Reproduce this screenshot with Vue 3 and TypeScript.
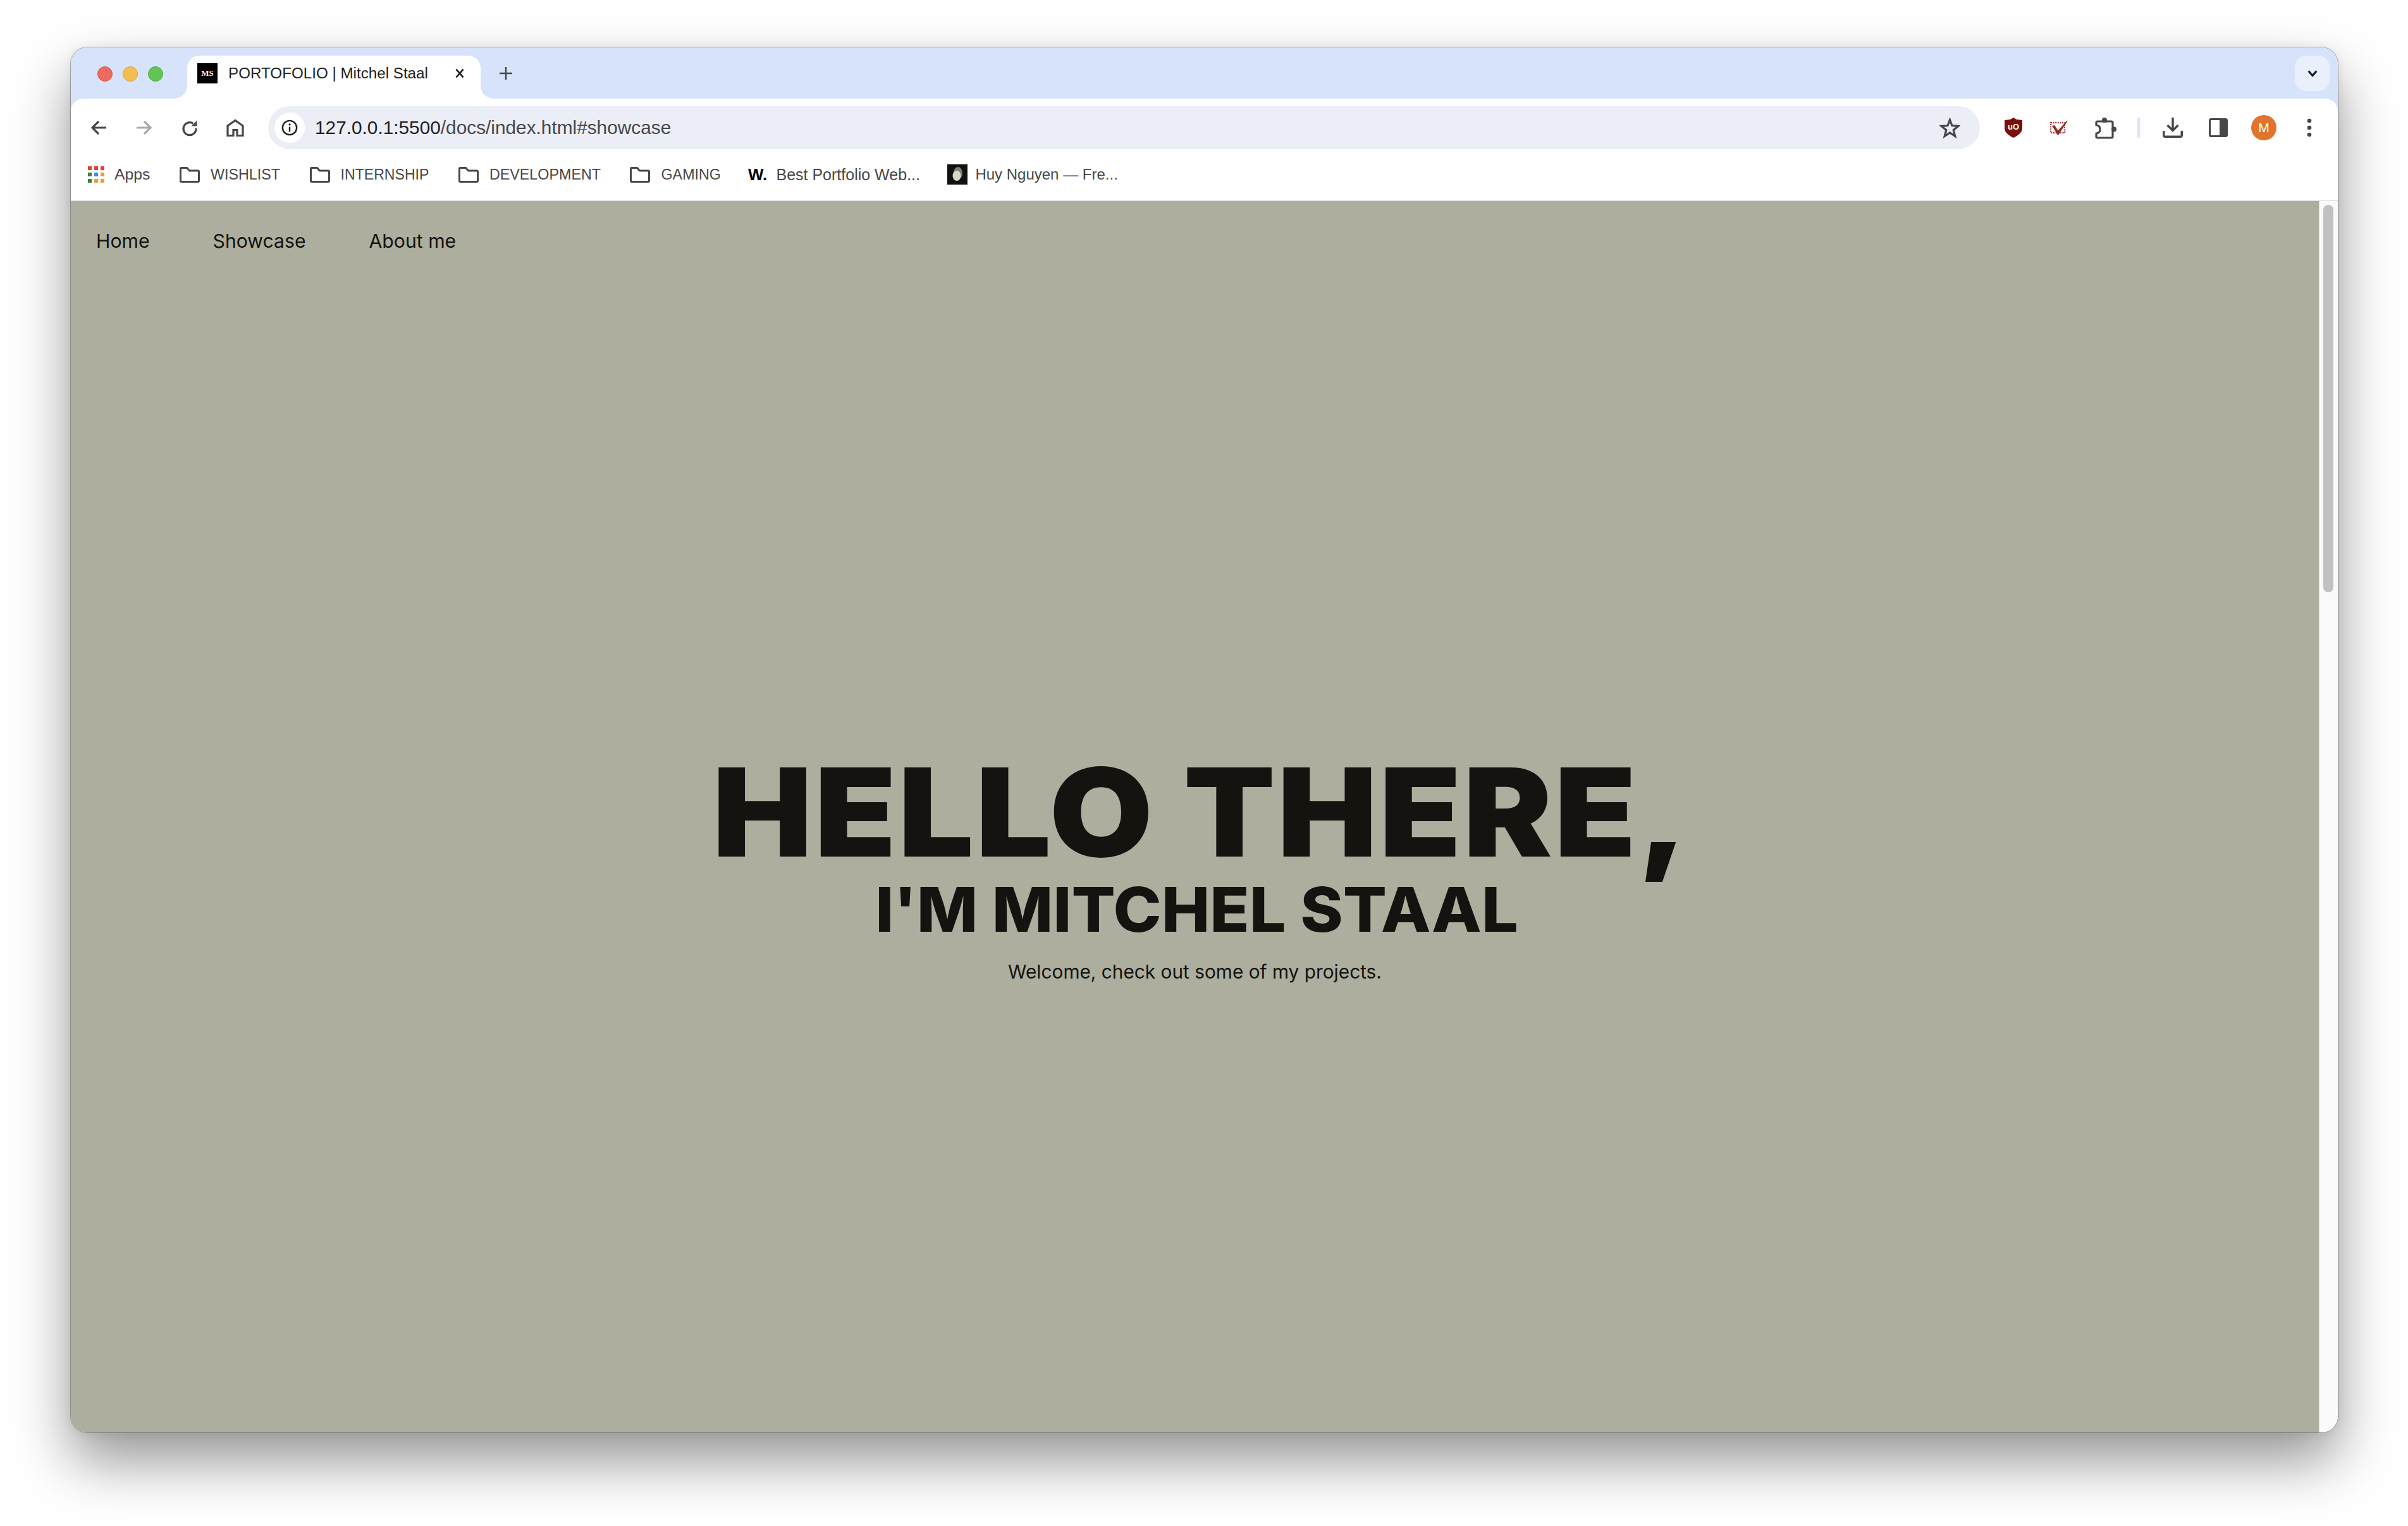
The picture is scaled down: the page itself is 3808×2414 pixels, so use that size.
<script setup lang="ts">
interface Bookmark { label: string; kind: 'apps' | 'folder' | 'w' | 'huy'; size: number }
const bookmarks: Bookmark[] = [
  { label: 'Apps', kind: 'apps', size: 24.8 },
  { label: 'WISHLIST', kind: 'folder', size: 23.3 },
  { label: 'INTERNSHIP', kind: 'folder', size: 23.1 },
  { label: 'DEVELOPMENT', kind: 'folder', size: 23.3 },
  { label: 'GAMING', kind: 'folder', size: 23.3 },
  { label: 'Best Portfolio Web...', kind: 'w', size: 25 },
  { label: 'Huy Nguyen — Fre...', kind: 'huy', size: 24 },
]
const appColors = ['#db4437', '#db4437', '#db4437', '#3a7d44', '#4285f4', '#e8a033', '#3a7d44', '#e8a033', '#e8a033']
const navItems = ['Home', 'Showcase', 'About me']
</script>

<template>
  <div class="stage">
    <div class="window">
      <div class="tabstrip">
        <div class="lights">
          <span class="light red"></span>
          <span class="light yellow"></span>
          <span class="light green"></span>
        </div>
        <div class="tab">
          <span class="favicon">MS</span>
          <span class="tab-title">PORTOFOLIO | Mitchel Staal</span>
          <svg class="tab-close" viewBox="0 0 20 20"><path d="M3 2 17 18M17 2 3 18" /></svg>
        </div>
        <svg class="new-tab" viewBox="0 0 24 24"><path d="M12 2V22M2 12H22" /></svg>
        <div class="strip-spacer"></div>
        <div class="tab-search">
          <svg viewBox="0 0 20 20"><path d="M3 6 10 14 17 6" /></svg>
        </div>
      </div>

      <div class="toolbar">
        <svg class="tool" viewBox="0 0 28 28"><path d="M26 14H4M14 4 4 14 14 24" /></svg>
        <svg class="tool dim" viewBox="0 0 28 28"><path d="M2 14H24M14 4 24 14 14 24" /></svg>
        <svg class="tool" viewBox="0 0 28 28">
          <path d="M24 15A10 10 0 1 1 19.500 7.300" />
          <path class="solid" d="M25.500 2.500V11.500H16.500Z" />
        </svg>
        <svg class="tool" viewBox="0 0 28 28"><path d="M14 2.500 2 11V26.500H11V17.500H17V26.500H26V11Z" /></svg>
        <div class="omnibox">
          <span class="site-info">
            <svg viewBox="0 0 28 28">
              <circle cx="14" cy="14" r="12" />
              <path d="M14 12.500V21" />
              <circle class="dot" cx="14" cy="8.500" r="1.800" />
            </svg>
          </span>
          <span class="url"><span class="host">127.0.0.1:5500</span>/docs/index.html#showcase</span>
          <svg class="star" viewBox="0 0 33 33"><path d="M16.500 3.500 20 12.800 30 13.400 22.200 19.700 24.800 29.500 16.500 24 8.200 29.500 10.800 19.700 3 13.400 13 12.800Z" /></svg>
        </div>
        <div class="extensions">
          <svg class="ext shield-icon" viewBox="0 0 28 32">
            <path class="shield" d="M14 0 19 3 28 4V17C28 24 20 29 14 32 8 29 0 24 0 17V4L9 3Z" />
            <text x="14" y="18.500" class="shield-text">uO</text>
          </svg>
          <svg class="ext check-icon" viewBox="0 0 28 22">
            <rect class="dotted" x="1" y="3" width="22" height="16" />
            <path class="check" d="M3 8 7 7 12.500 15.500 26.500 0 28 0 13.500 22 11.500 22Z" />
          </svg>
          <svg class="tool puzzle" viewBox="0 0 34 35">
            <path d="M4 7H26Q28 7 28 9V31Q28 33 26 33H4Q2 33 2 31V26Q8 25.500 8 19.500T2 13V9Q2 7 4 7Z" />
            <circle class="solid" cx="15" cy="5" r="4" />
            <circle class="solid" cx="30" cy="19.500" r="4" />
          </svg>
          <span class="divider"></span>
          <svg class="tool download" viewBox="0 0 32 32">
            <path d="M16 0V20M7.500 12 16 20.500 24.500 12" />
            <path d="M1.750 21V28Q1.750 30.250 4 30.250H28Q30.250 30.250 30.250 28V21" />
          </svg>
          <svg class="tool panel" viewBox="0 0 30 30">
            <rect x="1.500" y="1.500" width="27" height="27" rx="2.500" />
            <rect class="solid" x="17" y="1.500" width="11.500" height="27" />
          </svg>
          <span class="avatar">M</span>
          <svg class="kebab" viewBox="0 0 8 30">
            <circle cx="4" cy="4" r="3.300" /><circle cx="4" cy="15" r="3.300" /><circle cx="4" cy="26" r="3.300" />
          </svg>
        </div>
      </div>

      <div class="bookmarks">
        <div v-for="b in bookmarks" :key="b.label" class="bookmark" :class="'is-' + b.kind" :style="{ fontSize: b.size + 'px' }">
          <span v-if="b.kind === 'apps'" class="apps-grid">
            <i v-for="(c, i) in appColors" :key="i" :style="{ background: c }"></i>
          </span>
          <svg v-else-if="b.kind === 'folder'" class="folder" viewBox="0 0 32 25"><path d="M1.500 3Q1.500 1.500 3 1.500H11.500L15.500 6H29Q30.500 6 30.500 7.500V22Q30.500 23.500 29 23.500H3Q1.500 23.500 1.500 22Z" /></svg>
          <span v-else-if="b.kind === 'w'" class="w-icon">W.</span>
          <svg v-else class="huy-icon" viewBox="0 0 32 32">
            <rect width="32" height="32" fill="#11100d" />
            <ellipse cx="17" cy="14" rx="7" ry="10" fill="#7e7f70" />
            <ellipse cx="15" cy="18" rx="6.500" ry="8" fill="#d6d7c9" />
          </svg>
          <span class="bookmark-label">{{ b.label }}</span>
        </div>
      </div>

      <div class="viewport">
        <main class="page">
          <nav class="site-nav">
            <a v-for="n in navItems" :key="n" class="site-link">{{ n }}</a>
          </nav>
          <section class="hero">
            <h1 class="hero-title">HELLO THERE,</h1>
            <h2 class="hero-sub">I'M MITCHEL STAAL</h2>
            <p class="hero-text">Welcome, check out some of my projects.</p>
          </section>
        </main>
        <div class="scrollbar"><div class="thumb"></div></div>
      </div>
    </div>
  </div>
</template>

<style>
html, body { margin: 0; padding: 0; background: #fff; }
</style>

<style scoped>
.stage {
  width: 3808px;
  height: 2414px;
  box-sizing: border-box;
  padding: 75px 111px 148px 112px;
  overflow: hidden;
  display: flex;
  background: #fff;
}
.window {
  flex: 1;
  display: flex;
  flex-direction: column;
  border-radius: 26px;
  overflow: hidden;
  background: #d6e3fa;
  box-shadow: 0 0 0 1px rgba(0,0,0,.28), 0 0 18px rgba(0,0,0,.08), 0 45px 90px rgba(0,0,0,.42);
  font-family: "Liberation Sans", Arial, sans-serif;
}
.tabstrip {
  height: 81px;
  flex: none;
  background: #d6e3fa;
  display: flex;
  align-items: flex-end;
  box-sizing: border-box;
  padding-left: 42px;
}
.lights { display: flex; gap: 16px; align-self: flex-start; margin-top: 30px; width: 142px; }
.light { width: 24px; height: 24px; border-radius: 50%; box-sizing: border-box; }
.red { background: #ee6a5f; border: 1px solid #d5574c; }
.yellow { background: #f5bd4f; border: 1px solid #d9a23c; }
.green { background: #61c454; border: 1px solid #52a846; }
.tab {
  position: relative;
  width: 464px;
  height: 68px;
  background: #fff;
  border-radius: 20px 20px 0 0;
  display: flex;
  align-items: center;
  box-sizing: border-box;
  padding: 0 0 12px 16px;
}
.tab::before, .tab::after {
  content: "";
  position: absolute;
  bottom: 0;
  width: 20px;
  height: 20px;
  background: radial-gradient(circle at 0 0, #d6e3fa 19.500px, #fff 20px);
}
.tab::before { left: -20px; }
.tab::after { right: -20px; transform: scaleX(-1); }
.favicon {
  width: 32px;
  height: 32px;
  background: #000;
  color: #fff;
  font: 700 13px/32px "Liberation Serif", serif;
  text-align: center;
  flex: none;
}
.tab-title { margin-left: 17px; font-size: 24.200px; color: #1f1f1f; white-space: nowrap; width: 358px; flex: none; }
.tab-close { width: 16px; height: 16px; fill: none; stroke: #1f1f1f; stroke-width: 3.200; flex: none; }
.new-tab { width: 24px; height: 24px; fill: none; stroke: #474747; stroke-width: 2.600; margin: 0 0 28px 28px; flex: none; }
.strip-spacer { flex: 1; }
.tab-search {
  width: 55px;
  height: 56px;
  border-radius: 18px;
  background: #e9f0fc;
  display: flex;
  align-items: center;
  justify-content: center;
  margin: 0 13px 12px 0;
}
.tab-search svg { width: 18px; height: 18px; fill: none; stroke: #1f1f1f; stroke-width: 3.500; }
.toolbar {
  height: 92px;
  flex: none;
  display: flex;
  align-items: center;
  box-sizing: border-box;
  padding: 0 0 0 30px;
  background: #fff;
  border-radius: 20px 20px 0 0;
}
.tool { fill: none; stroke: #474747; stroke-width: 3.200; flex: none; }
.tool .solid { fill: #474747; stroke: none; }
.toolbar > .tool { width: 28px; height: 28px; margin-right: 44px; }
.toolbar > .tool.dim { stroke: #a8a8a8; }
.omnibox {
  flex: none;
  width: 2707px;
  height: 68px;
  margin-left: -6px;
  border-radius: 34px;
  background: #ebeef7;
  display: flex;
  align-items: center;
  box-sizing: border-box;
  padding: 0 31px 0 10px;
}
.site-info {
  width: 48px;
  height: 48px;
  border-radius: 50%;
  background: #fff;
  display: flex;
  align-items: center;
  justify-content: center;
  flex: none;
}
.site-info svg { width: 26px; height: 26px; fill: none; stroke: #1f1f1f; stroke-width: 2.600; }
.site-info .dot { fill: #1f1f1f; stroke: none; }
.url { margin-left: 16px; font-size: 29.800px; color: #474747; flex: 1; white-space: nowrap; }
.host { color: #1f1f1f; }
.star { width: 33px; height: 33px; fill: none; stroke: #474747; stroke-width: 3.200; flex: none; }
.extensions { display: flex; align-items: center; flex: none; margin-left: 39px; }
.ext { flex: none; }
.shield-icon { width: 28px; height: 32px; margin-right: 44px; }
.check-icon { width: 28px; height: 22px; margin-right: 43px; }
.shield { fill: #7a0f09; }
.shield-text { fill: #fff; font: 700 13px "Liberation Sans", sans-serif; text-anchor: middle; }
.dotted { fill: none; stroke: #a33a34; stroke-width: 2.400; stroke-dasharray: 2 1.600; }
.check { fill: #8f2c26; }
.puzzle { width: 34px; height: 35px; margin-right: 33px; stroke-linejoin: round; }
.divider { width: 4px; height: 32px; border-radius: 2px; background: #d6e3fa; margin-right: 36px; flex: none; }
.download { width: 32px; height: 32px; margin-right: 41px; stroke-width: 3.500; }
.panel { width: 30px; height: 30px; margin-right: 37px; }
.avatar {
  width: 40px;
  height: 40px;
  border-radius: 50%;
  background: #e0742c;
  color: #fff;
  font-size: 21px;
  line-height: 40px;
  text-align: center;
  flex: none;
  margin-right: 48px;
}
.kebab { width: 8px; height: 30px; fill: #474747; flex: none; }
.bookmarks {
  height: 68px;
  flex: none;
  box-sizing: content-box;
  display: flex;
  align-items: center;
  padding: 0 0 0 27px;
  gap: 46.500px;
  border-bottom: 2px solid #e6e6e6;
  background: #fff;
}
.bookmark {
  display: flex;
  align-items: center;
  gap: 17px;
  color: #474747;
  white-space: nowrap;
  position: relative;
  top: -6px;
}
.is-apps { gap: 16px; }
.is-w, .is-huy { gap: 12.500px; margin-left: -3.500px; }
.apps-grid { display: grid; grid-template-columns: repeat(3, 6px); grid-auto-rows: 6px; gap: 4px; }
.apps-grid i { display: block; }
.folder { width: 32px; height: 25px; fill: none; stroke: #474747; stroke-width: 3; }
.w-icon { font: 700 26px/32px "Liberation Sans", sans-serif; color: #000; width: 32px; white-space: nowrap; }
.huy-icon { width: 32px; height: 32px; }
.viewport { flex: 1; display: flex; min-height: 0; background: #fff; }
.page {
  flex: 1;
  background: #adae9d;
  color: #141310;
  display: flex;
  flex-direction: column;
  position: relative;
}
.site-nav { display: flex; gap: 100px; padding: 45px 0 0 40px; font-family: Inter, sans-serif; font-size: 30.200px; line-height: 36px; }
.site-link { color: #141310; }
.hero { position: absolute; left: 0; right: 0; top: 867.500px; text-align: center; }
.hero-title {
  margin: 0;
  font: 900 194px/198px Inter, sans-serif;
  letter-spacing: 3px;
  transform: translateX(10px) scaleX(1.0875);
}
.hero-sub {
  margin: 0;
  font: 800 98px/110px Inter, sans-serif;
  transform: translateX(3px) scaleX(1.045);
}
.hero-text { margin: 25px 0 0; font: 400 29.800px/36px Inter, sans-serif; }
.scrollbar { width: 30px; background: #fafafa; flex: none; box-sizing: border-box; padding: 6px 7px 0 5px; border-left: 2px solid #ececec; }
.thumb { height: 613px; border-radius: 8px; background: #c1c1c1; }
</style>
